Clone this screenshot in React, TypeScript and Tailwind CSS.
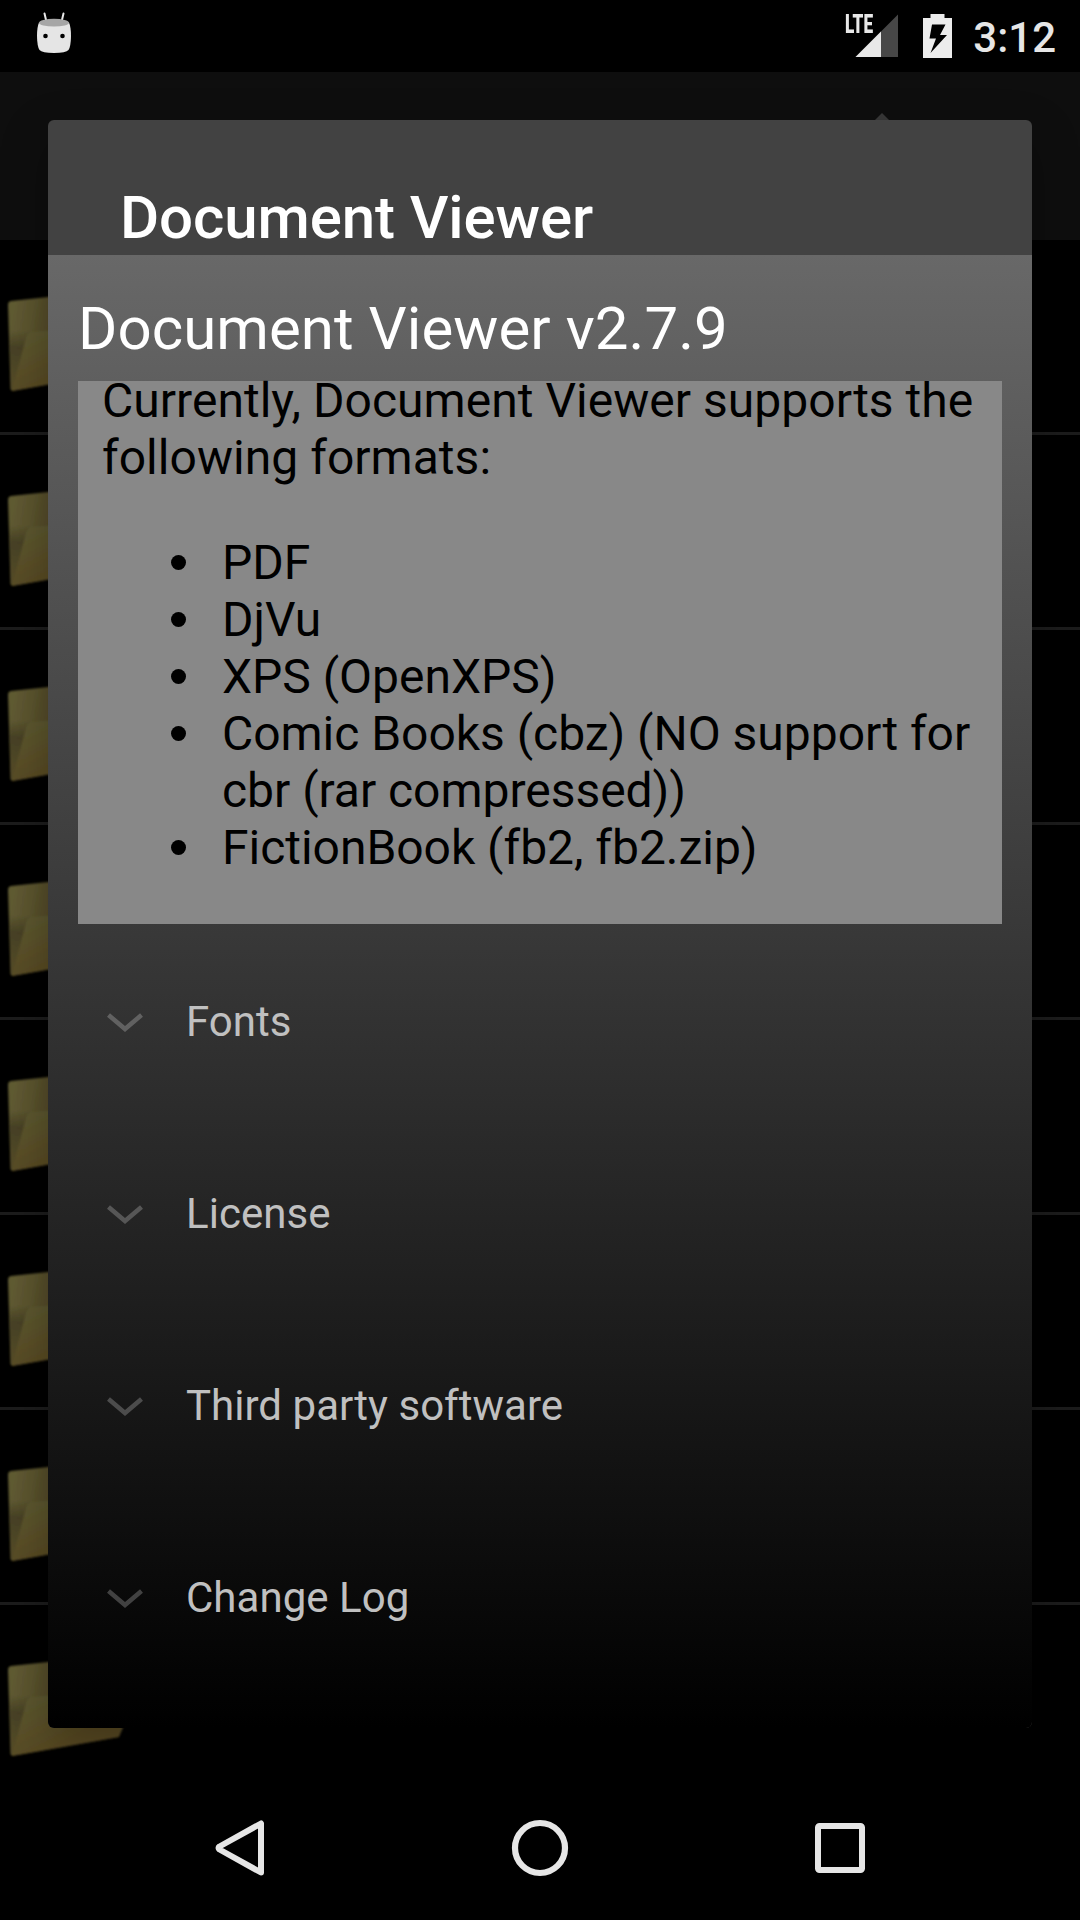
const formats = [
  'PDF',
  'DjVu',
  'XPS (OpenXPS)',
  'Comic Books (cbz) (NO support for cbr (rar compressed))',
  'FictionBook (fb2, fb2.zip)',
];

const sections = ['Fonts', 'License', 'Third party software', 'Change Log'];

function StatusBar() {
  return (
    <header className="flex h-[72px] shrink-0 items-start justify-between bg-black pr-6 pl-9">
      <svg className="mt-3 h-[42px] w-9" viewBox="36 12 36 42">
        <path d="M44.5 13.5 46.5 22M63.5 13.5 61.5 22" stroke="#e8e8e8" strokeWidth="2" strokeLinecap="round" />
        <path d="M39 22.5Q37 27 37 36Q37.2 47 39.5 50Q42 53 54 53Q66 53 68.5 50Q70.8 47 71 36Q71 27 69 22.500Z" fill="#e5e5e5" />
        <ellipse cx="54" cy="22.700" rx="15" ry="3.900" fill="#a6a6a6" />
        <circle cx="45.500" cy="36" r="2.300" fill="#000" />
        <circle cx="62.500" cy="36" r="2.300" fill="#000" />
      </svg>
      <div className="flex items-start">
        <div className="relative h-[60px] w-[56px]">
          <svg className="h-[60px] w-[56px]" viewBox="844 0 56 60">
            <path d="M898 14.500V57H855.500Z" fill="#474747" />
            <path d="M881 31.500V57H855.500Z" fill="#e8e8e8" />
          </svg>
          <span className="absolute top-[11px] left-px origin-left scale-x-[0.66] font-['Roboto'] text-[26px] leading-[27px] font-black text-[#e8e8e8]">
            LTE
          </span>
        </div>
        <svg className="ml-[22px] h-[60px] w-[31px]" viewBox="922 0 31 60">
          <path
            d="M930.500 14H944.500V18H952V58H923V18H930.500ZM932 24.500 929.500 38.500H936L930.500 53 947 35H940L945.500 24.500Z"
            fill="#ececec"
            fillRule="evenodd"
          />
        </svg>
        <span className="mt-[13px] ml-5 text-[42px] leading-[49px] font-medium text-[#e6e6e6]">3:12</span>
      </div>
    </header>
  );
}

function FolderRow() {
  return (
    <li className="h-[195px] shrink-0 border-b-[3px] border-[#1c1c1c]">
      <svg className="h-[192px] w-[144px]" viewBox="0 0 144 192">
        <defs>
          <linearGradient id="back" gradientUnits="userSpaceOnUse" x1="8" y1="70" x2="60" y2="80">
            <stop offset="0" stopColor="#625d34" />
            <stop offset="0.500" stopColor="#5a532d" />
            <stop offset="1" stopColor="#4f4525" />
          </linearGradient>
          <linearGradient id="front" gradientUnits="userSpaceOnUse" x1="30" y1="92" x2="60" y2="150">
            <stop offset="0" stopColor="#5b572f" />
            <stop offset="0.500" stopColor="#5a4f28" />
            <stop offset="1" stopColor="#584820" />
          </linearGradient>
          <linearGradient id="fold" gradientUnits="userSpaceOnUse" x1="0" y1="90" x2="0" y2="149">
            <stop offset="0" stopColor="#403a21" stopOpacity="0" />
            <stop offset="0.300" stopColor="#403a21" stopOpacity="0.750" />
            <stop offset="1" stopColor="#524725" stopOpacity="0.600" />
          </linearGradient>
          <filter id="soft">
            <feGaussianBlur stdDeviation="1.100" />
          </filter>
        </defs>
        <g filter="url(#soft)">
          <path d="M8 65Q8 61.500 11 61L48 57 110 50 123 123 119 132 12 151 10.500 149Z" fill="url(#back)" />
          <path d="M9 88 30 90 13 149H11Z" fill="url(#fold)" />
          <path d="M32 92 130 84 119 132 12 151 26 98Q28 92 32 92Z" fill="url(#front)" />
        </g>
      </svg>
    </li>
  );
}

function Section({ label }: { label: string }) {
  return (
    <div className="flex h-[192px] items-center pt-0.5">
      <svg className="mt-1 ml-[28px] h-6 w-[38px]" viewBox="0 0 38 24" fill="none">
        <path d="M2.500 4 19 18 35.500 4" stroke="#fff" strokeOpacity="0.230" strokeWidth="4.500" />
      </svg>
      <span className="ml-[42px] text-[42px] leading-[49px] tracking-[0.03px] text-[#c0c0c0]">{label}</span>
    </div>
  );
}

function AboutDialog() {
  return (
    <section className="absolute top-[120px] left-12 flex h-[1608px] w-[984px] flex-col overflow-hidden rounded-[6px] bg-[#424242] shadow-[0_18px_48px_rgba(0,0,0,0.25)]">
      <h1 className="h-[135px] shrink-0 pt-[63px] pl-[72px] text-[60px] leading-[70px] font-medium tracking-[-0.1px] text-white">
        Document Viewer
      </h1>
      <div className="flex flex-1 flex-col bg-linear-to-b/srgb from-[#686868] to-black px-[30px]">
        <h2 className="h-[126px] shrink-0 pt-[39px] text-[60px] leading-[70px] tracking-[0.05px] text-white">
          Document Viewer v2.7.9
        </h2>
        <div className="flow-root h-[543px] shrink-0 bg-[#888] px-6 text-[48px] leading-[57px] text-black">
          <p className="-mt-[9px] tracking-[0.03px]">Currently, Document Viewer supports the following formats:</p>
          <ul className="mt-12 pl-[120px] tracking-[-0.03px]">
            {formats.map((format) => (
              <li key={format} className="relative">
                <span className="absolute top-[21px] -left-[51px] size-[15px] rounded-full bg-black" />
                {format}
              </li>
            ))}
          </ul>
        </div>
        {sections.map((label) => (
          <Section key={label} label={label} />
        ))}
      </div>
    </section>
  );
}

function NavigationBar() {
  return (
    <nav className="flex h-36 shrink-0 items-center justify-center gap-[200px] bg-black">
      <svg className="size-[100px]" viewBox="190 1798 100 100" fill="none" stroke="#e6e6e6">
        <path d="M261 1823.500V1872.500L219.500 1849.500Q217.500 1848 219.500 1846.500Z" strokeWidth="6" strokeLinejoin="round" />
      </svg>
      <svg className="size-[100px]" viewBox="490 1798 100 100" fill="none" stroke="#e6e6e6">
        <circle cx="540" cy="1848" r="25" strokeWidth="6.200" />
      </svg>
      <svg className="size-[100px]" viewBox="790 1798 100 100" fill="none" stroke="#e6e6e6">
        <rect x="818" y="1826" width="44" height="44" rx="1.500" strokeWidth="6" />
      </svg>
    </nav>
  );
}

export default function App() {
  return (
    <main className="relative flex h-[1920px] w-[1080px] flex-col overflow-hidden bg-black font-['Roboto',sans-serif]">
      <StatusBar />
      <div className="flex h-[168px] shrink-0 items-start bg-[#0e0e0e]">
        <svg className="mt-10 ml-[872px] h-5 w-5" viewBox="0 0 20 20">
          <path d="M1 10 10 1 19 10V20H1Z" fill="#383838" />
        </svg>
      </div>
      <ul className="flex h-[1536px] shrink-0 flex-col overflow-hidden">
        {Array.from({ length: 8 }, (_, row) => (
          <FolderRow key={row} />
        ))}
      </ul>
      <AboutDialog />
      <NavigationBar />
    </main>
  );
}
